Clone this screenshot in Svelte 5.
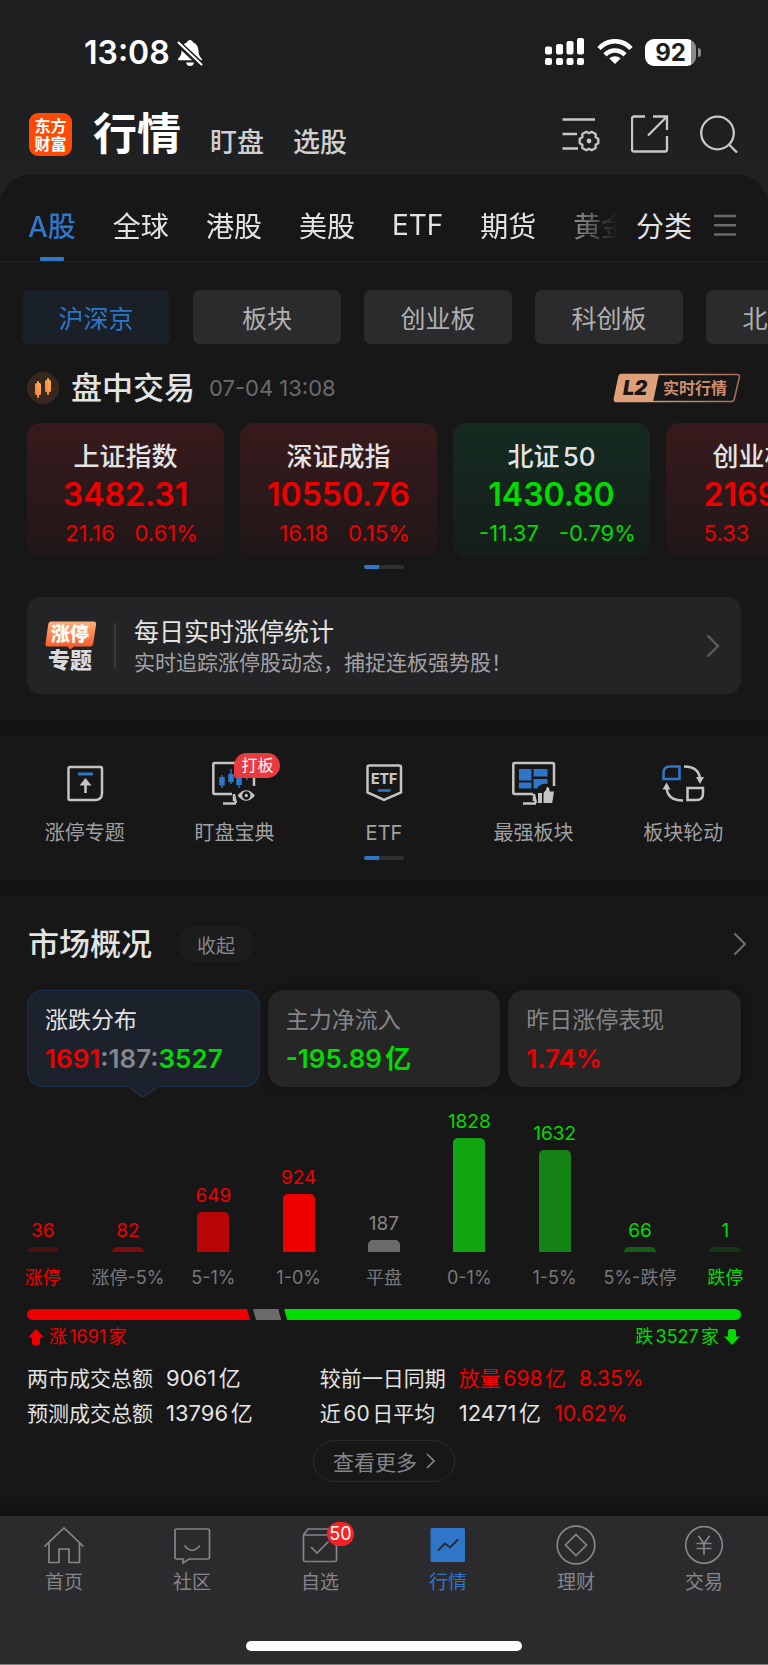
<script>
  let activeTab = 'A股';
  let activeBoard = '沪深京';
  let activeNav = '行情';

  const tabs = ['A股', '全球', '港股', '美股', 'ETF', '期货', '黄金'];
  const boards = ['沪深京', '板块', '创业板', '科创板', '北交所'];

  const indices = [
    { name: '上证指数', value: '3482.31', change: '21.16', percent: '0.61%', up: true },
    { name: '深证成指', value: '10550.76', change: '16.18', percent: '0.15%', up: true },
    { name: '北证50', value: '1430.80', change: '-11.37', percent: '-0.79%', up: false },
    { name: '创业板指', value: '2169.57', change: '5.33', percent: '0.25%', up: true }
  ];

  const shortcuts = ['涨停专题', '盯盘宝典', 'ETF', '最强板块', '板块轮动'];
  const navItems = ['首页', '社区', '自选', '行情', '理财', '交易'];

  const bars = [
    { label: '涨停', count: 36, color: '#4a1111', text: 'red', strong: true },
    { label: '涨停-5%', count: 82, color: '#7c0c0e', text: 'red' },
    { label: '5-1%', count: 649, color: '#b80507', text: 'red' },
    { label: '1-0%', count: 924, color: '#ee0000', text: 'red' },
    { label: '平盘', count: 187, color: '#6b6b6b', text: 'flat' },
    { label: '0-1%', count: 1828, color: '#12a512', text: 'green' },
    { label: '1-5%', count: 1632, color: '#158215', text: 'green' },
    { label: '5%-跌停', count: 66, color: '#155e15', text: 'green' },
    { label: '跌停', count: 1, color: '#163716', text: 'green', strong: true }
  ];

  const maxCount = 1828;
  // tiny counts still get a visible stub
  const barHeight = (count) => Math.max(5, Math.round((count / maxCount) * 114));

  const rise = 1691;
  const flat = 187;
  const fall = 3527;
</script>

<div class="page">
  <div class="status">
    <div class="clock">
      <span>13:08</span>
      <svg width="26" height="28" viewBox="0 0 26 28" fill="#fff">
        <path d="M13 1c1.500 0 2.600 1 2.900 2.200 3.400 1.200 5.300 4.200 5.500 8 .2 4 .8 6 3.100 8 .9 1 .6 2.100-.7 2.100H2.200c-1.300 0-1.600-1.100-.7-2.100 2.300-2 2.900-4 3.100-8 .2-3.800 2.100-6.800 5.500-8C10.400 2 11.500 1 13 1z" />
        <path d="M9 23.500h8c-.5 2.400-2 3.500-4 3.500s-3.500-1.100-4-3.500z" />
        <path d="M1 4l23.500 22" stroke="#1d1e20" stroke-width="6" />
        <path d="M1.500 3.500l23 22" stroke="#fff" stroke-width="2" stroke-linecap="round" />
      </svg>
    </div>
    <div class="signals">
      <svg width="40" height="28" viewBox="0 0 40 28" fill="#fff">
        <rect x="0" y="8.500" width="7" height="8" rx="2" /><rect x="0" y="20" width="7" height="7" rx="2" />
        <rect x="11" y="6" width="7" height="10.500" rx="2" /><rect x="11" y="20" width="7" height="7" rx="2" />
        <rect x="21.500" y="3" width="7" height="13.500" rx="2" /><rect x="21.500" y="20" width="7" height="7" rx="2" />
        <rect x="32" y="0" width="7" height="16.500" rx="2" /><rect x="32" y="20" width="7" height="7" rx="2" />
      </svg>
      <svg class="wifi" width="36" height="26" viewBox="0 0 36 26" fill="none" stroke="#fff" stroke-width="4.600">
        <path d="M2 9.500C11-.2 25-.2 34 9.500" />
        <path d="M8 15.800c5.800-5.800 14.200-5.800 20 0" />
        <path d="M18 25l-5.600-5.600c3.200-2.800 8-2.800 11.200 0z" fill="#fff" stroke="none" />
      </svg>
      <div class="battery"><span>92</span></div>
    </div>
  </div>

  <header>
    <div class="logo"><span>东方</span><span>财富</span></div>
    <h1>行情</h1>
    <a href="#watch">盯盘</a>
    <a href="#pick">选股</a>
    <div class="tools">
      <button aria-label="设置">
        <svg width="38" height="38" viewBox="0 0 38 38" fill="none" stroke="#c8c8c8" stroke-width="2.300">
          <path d="M.5 4.500H33M.5 19H15M.5 33.500H16" />
          <path transform="translate(27 26)" stroke-linejoin="round" d="M9.300-2.300v4.600L6.600 3.800l.1 3.100-4.100 2.300L0 7.800l-2.600 1.400-4.100-2.300.1-3.100-2.700-1.500v-4.600l2.700-1.500-.1-3.100 4.100-2.300L0-7.800l2.600-1.400 4.100 2.300-.1 3.100z" />
          <circle cx="27" cy="26" r="2.400" fill="#c8c8c8" stroke="none" />
        </svg>
      </button>
      <button aria-label="分享">
        <svg width="38" height="38" viewBox="0 0 38 38" fill="none" stroke="#c8c8c8" stroke-width="2.300">
          <path d="M14 1.500H3a2 2 0 0 0-2 2v31a2 2 0 0 0 2 2h31a2 2 0 0 0 2-2V21M22 1.500h14V15M36 1.500L17 20.500" />
        </svg>
      </button>
      <button aria-label="搜索">
        <svg width="38" height="38" viewBox="0 0 38 38" fill="none" stroke="#c8c8c8" stroke-width="2.300">
          <circle cx="17.500" cy="18" r="16.300" /><path d="M29 29.500l8 8" />
        </svg>
      </button>
    </div>
  </header>

  <main>
    <nav class="tabs">
      <div class="tab-list">
        {#each tabs as tab}
          <button class:active={tab === activeTab} on:click={() => (activeTab = tab)}>{tab}</button>
        {/each}
      </div>
      <button class="category">
        分类
        <svg width="22" height="24" viewBox="0 0 22 24" stroke="#6a6a6a" stroke-width="2.400">
          <path d="M0 3h22M0 12.300h22M0 21.500h22" />
        </svg>
      </button>
    </nav>

    <div class="boards">
      {#each boards as board}
        <button class:active={board === activeBoard} on:click={() => (activeBoard = board)}>{board}</button>
      {/each}
    </div>

    <div class="session">
      <svg width="32" height="32" viewBox="0 0 32 32">
        <defs>
          <linearGradient id="candle" x1="0" y1="1" x2="1" y2="0">
            <stop offset="0" stop-color="#ff7a35" /><stop offset="1" stop-color="#ffb45a" />
          </linearGradient>
        </defs>
        <circle cx="16" cy="16" r="16" fill="#38271f" />
        <g fill="url(#candle)">
          <rect x="8" y="11" width="6" height="12" rx="1.500" /><rect x="10" y="9" width="2" height="17" rx="1" />
          <rect x="18" y="8" width="6" height="12" rx="1.500" /><rect x="20" y="6" width="2" height="17" rx="1" />
        </g>
      </svg>
      <h2>盘中交易</h2>
      <time>07-04 13:08</time>
      <a class="level2" href="#level2" aria-label="L2 实时行情">
        <svg width="128" height="30" viewBox="0 0 128 30">
          <defs>
            <linearGradient id="copper" x1="0" y1="0" x2="1" y2="0">
              <stop offset="0" stop-color="#e9ad7f" /><stop offset="1" stop-color="#a5685a" />
            </linearGradient>
          </defs>
          <path d="M8.500 1.500H124q3 0 2.300 3l-5 21.500q-.7 2.500-3 2.500H3.500Q1 28.500 1.500 26L6 4q.6-2.500 2.500-2.500z" fill="none" stroke="url(#copper)" stroke-width="1.600" />
          <path d="M8.500 1H46l-6 28H3.500Q.6 29 1.200 26L6 3.500Q6.600 1 8.500 1z" fill="#dfa079" />
          <text x="10" y="22" class="l2-text">L2</text>
          <text x="50" y="21" class="l2-label">实时行情</text>
        </svg>
      </a>
    </div>

    <div class="indices">
      {#each indices as item}
        <a href="#index" class="index" class:down={!item.up}>
          <strong>{item.name}</strong>
          <b>{item.value}</b>
          <span class="delta"><span>{item.change}</span><span>{item.percent}</span></span>
        </a>
      {/each}
    </div>
    <div class="pager"></div>

    <a class="banner" href="#limit-up">
      <svg width="52" height="50" viewBox="0 0 52 50">
        <defs>
          <linearGradient id="flame" x1="0" y1="0" x2="0" y2="1">
            <stop offset="0" stop-color="#ffb07c" /><stop offset="1" stop-color="#fb5420" />
          </linearGradient>
        </defs>
        <path d="M6 .5h42.500q3 0 2.600 3l-3 19.500q-.5 2.500-3 2.500H29l-3.500 3-3-3H3q-3 0-2.500-3L3.300 3Q3.600.5 6 .5z" fill="url(#flame)" />
        <text x="6" y="20" class="tag-top">涨停</text>
        <text x="3" y="47" class="tag-bottom">专题</text>
      </svg>
      <div class="banner-text">
        <span class="banner-title">每日实时涨停统计</span>
        <span class="banner-sub">实时追踪涨停股动态，捕捉连板强势股！</span>
      </div>
      <svg width="14" height="24" viewBox="0 0 14 24" fill="none" stroke="#5d5d5f" stroke-width="2.400">
        <path d="M1.500 1.500L12 12 1.500 22.500" />
      </svg>
    </a>

    <section class="shortcuts">
      <div class="shortcut-row">
        {#each shortcuts as name, i}
          <a href="#shortcut">
            <span class="icon">
              <svg width="48" height="48" viewBox="0 0 48 48" fill="none" stroke="#c4c4c4" stroke-width="2.500">
                {#if i === 0}
                  <path d="M9 8h30.500q1.500 0 1.500 1.500V34q0 7-7 7H9q-1.500 0-1.500-1.500v-30Q7.500 8 9 8z" />
                  <path d="M17 15h15" stroke="#2f75c8" stroke-width="3" />
                  <path d="M24.500 34V22" stroke-width="2.600" />
                  <path d="M24.500 19l6 7.500h-12z" fill="#c4c4c4" stroke="none" />
                {:else if i === 1}
                  <path d="M22 35H4.500Q3.300 35 3.300 33.500v-28Q3.300 4 4.500 4h38q1.500 0 1.500 1.500V27" />
                  <path d="M24 35v7M13 44.500h13M24 36l2 8" />
                  <path d="M12 16v13M21 10v15M29 16v13M37 12v9" stroke="#2f75c8" stroke-width="1.400" />
                  <path d="M12 18v8.500M21 15v8M29 18v8" stroke="#2f75c8" stroke-width="5.600" />
                  <path d="M27.500 36.500q8.500-10.500 17.500 0-9 10.500-17.500 0z" fill="#c4c4c4" stroke="none" />
                  <circle cx="36.300" cy="36.500" r="2.900" fill="#c4c4c4" stroke="#171717" />
                {:else if i === 2}
                  <path d="M9 6.500h30q2 0 2 2v25L24 41 7.500 33.500v-25q0-2 1.500-2z" />
                  <text x="24" y="25" class="etf-text">ETF</text>
                  <path d="M18 31.500h12.500" stroke="#2f75c8" stroke-width="2.600" />
                {:else if i === 3}
                  <path d="M23 35H4.500Q3.300 35 3.300 33.500v-28Q3.300 4 4.500 4h38q1.500 0 1.500 1.500V27" />
                  <path d="M24 35v7M13 44.500h13M24 36l2 8" />
                  <path d="M9 10h12.500v11.500H9zM23.500 10h14v7.500h-14zM9 23.500h12.500v6H9zM23.500 20h14v5q-7-1-10.500 4.500h-3.500z" fill="#2f75c8" stroke="none" />
                  <path d="M28 34h4v10h-4zM33.500 34q3.200-2.500 3.300-6 3-.2 2.800 4.500H44l-1.800 11.500h-8.700z" fill="#c4c4c4" stroke="none" />
                {:else}
                  <path d="M11 7.500h9.500v12.500h-16v-6q0-6.500 6.500-6.500z" stroke="#2f75c8" stroke-width="2.600" />
                  <path d="M28.500 29H44v5.500q0 6.500-6.500 6.500h-9z" />
                  <path d="M25 7.500q15.500 0 16 13.500M24 41.500Q8 41.500 7.500 28" />
                  <path d="M41 25l-4-7h8zM7.500 23.500l-4 7h8z" fill="#c4c4c4" stroke="none" />
                {/if}
              </svg>
              {#if i === 1}<em>打板</em>{/if}
            </span>
            {name}
          </a>
        {/each}
      </div>
      <div class="pager"></div>
    </section>

    <section class="market">
      <div class="market-head">
        <h2>市场概况</h2>
        <button class="fold">收起</button>
        <a href="#market" aria-label="更多">
          <svg width="14" height="24" viewBox="0 0 14 24" fill="none" stroke="#6c6c6e" stroke-width="2.200">
            <path d="M1.500 1.500L12 12 1.500 22.500" />
          </svg>
        </a>
      </div>

      <div class="summary">
        <button class="card selected">
          <span>涨跌分布</span>
          <b><i class="red">{rise}</i>:{flat}:<i class="green">{fall}</i></b>
          <svg class="pointer" width="28" height="12" viewBox="0 0 28 12">
            <path d="M0 1L11 9.500q3 2.500 6 0L28 1V0H0z" fill="#1b222b" />
            <path d="M0 1L11 9.500q3 2.500 6 0L28 1" fill="none" stroke="#1d304b" stroke-width="1.500" />
          </svg>
        </button>
        <button class="card">
          <span>主力净流入</span>
          <b class="green">-195.89亿</b>
        </button>
        <button class="card">
          <span>昨日涨停表现</span>
          <b class="red">1.74%</b>
        </button>
      </div>

      <div class="chart">
        {#each bars as bar}
          <div class="column">
            <span class={bar.text}>{bar.count}</span>
            <div class="bar" style="height: {barHeight(bar.count)}px; background: {bar.color}"></div>
            <span class="range {bar.strong ? bar.text : ''}">{bar.label}</span>
          </div>
        {/each}
      </div>

      <div class="ratio">
        <div class="ratio-rise" style="flex-grow: {rise}"></div>
        <div class="ratio-flat" style="flex-grow: {flat}"></div>
        <div class="ratio-fall" style="flex-grow: {fall}"></div>
      </div>
      <div class="ratio-text">
        <span class="red">
          <svg width="16" height="16" viewBox="0 0 16 16" fill="#ee0000"><path d="M8 0l8 8.500h-4V14q0 2-2 2H6q-2 0-2-2V8.500H0z" /></svg>
          <span>涨{rise}家</span>
        </span>
        <span class="green">
          <span>跌{fall}家</span>
          <svg width="16" height="16" viewBox="0 0 16 16" fill="#00dc00"><path d="M8 16l8-8.500h-4V2q0-2-2-2H6Q4 0 4 2v5.500H0z" /></svg>
        </span>
      </div>

      <dl class="turnover">
        <div><dt>两市成交总额</dt><dd>9061亿</dd></div>
        <div><dt>较前一日同期</dt><dd class="red">放量698亿</dd><dd class="red">8.35%</dd></div>
        <div><dt>预测成交总额</dt><dd>13796亿</dd></div>
        <div><dt>近60日平均</dt><dd>12471亿</dd><dd class="red">10.62%</dd></div>
      </dl>

      <button class="more">
        查看更多
        <svg width="9" height="16" viewBox="0 0 9 16" fill="none" stroke="#85858a" stroke-width="1.600"><path d="M1 1l7 7-7 7" /></svg>
      </button>
    </section>
  </main>

  <footer>
    <nav class="bottom">
      {#each navItems as name, i}
        <a href="#nav" class:active={name === activeNav} on:click={() => (activeNav = name)}>
          <span class="icon">
            <svg width="40" height="40" viewBox="0 0 40 40" fill="none" stroke="#85858a" stroke-width="1.700">
              {#if i === 0}
                <path d="M.5 21.500L20 3l19.500 18.500M5 17.500v20h10V24h10v13.500h10.500v-20" />
              {:else if i === 1}
                <path d="M4.500 4H36q1.500 0 1.500 1.500v27q0 1.500-1.500 1.500H17l-6 4v-4H4.500Q3 34 3 32.500v-27Q3 4 4.500 4zM12.500 20.500q7.500 9.500 15.500 0" />
              {:else if i === 2}
                <path d="M3.500 10L8 4h24l4.500 6v25q0 1.500-1.500 1.500H5q-1.500 0-1.500-1.500zM3.500 10h33M11 22l6 6 11.500-11.500" />
              {:else if i === 3}
                <rect x="2.500" y="3" width="34.500" height="34" rx="1.500" fill="#2f75c8" stroke="none" />
                <path d="M10 25.500l7-7 5 4 8-8" stroke="#2b2b2d" stroke-width="2" />
              {:else if i === 4}
                <circle cx="20" cy="20" r="18.800" /><path d="M20 9.500L30.500 20 20 30.500 9.500 20z" />
              {:else}
                <circle cx="20" cy="20" r="18.300" /><path d="M14.500 11l5.500 7.500L25.500 11M20 18.500v11.500M12.500 18.500h15M12.500 23.500h15" />
              {/if}
            </svg>
            {#if i === 2}<em>50</em>{/if}
          </span>
          {name}
        </a>
      {/each}
    </nav>
    <div class="home-bar"></div>
  </footer>
</div>

<style>
  :global(body) {
    background: #171717;
  }

  .page {
    overflow: hidden;
    background: linear-gradient(#1d1e20 0, #1d1e20 110px, #202122 175px, #202122 100%);
    color: #e3e3e3;
    font-family: Inter, "Noto Sans CJK SC", sans-serif;
    text-autospace: normal;
  }

  button {
    padding: 0;
    border: 0;
    background: none;
    color: inherit;
    font: inherit;
    cursor: pointer;
  }

  a {
    color: inherit;
    text-decoration: none;
  }

  h1, h2, dl, dd {
    margin: 0;
  }

  h2 {
    font-size: 31px;
    line-height: 36px;
    font-weight: 500;
  }

  svg {
    display: block;
    flex: none;
  }

  em, i {
    font-style: normal;
  }

  .red {
    color: #ee0000;
  }

  .green {
    color: #00dc00;
  }

  .flat {
    color: #85858a;
  }

  /* status bar */
  .status {
    display: flex;
    justify-content: space-between;
    align-items: center;
    height: 38px;
    padding: 34px 67px 0 84px;
    color: #fff;
  }

  .clock, .signals {
    display: flex;
    align-items: center;
  }

  .clock {
    gap: 7px;
    font-size: 32px;
    line-height: 38px;
    font-weight: 600;
  }

  .signals {
    padding-bottom: 2px;
  }

  .wifi {
    margin: 0 12px;
  }

  .battery {
    position: relative;
    width: 51px;
    height: 27px;
    border-radius: 9px;
    background: linear-gradient(90deg, #fff 46px, #8b8b8c 46px);
    color: #1d1e20;
    font-size: 24px;
    line-height: 27px;
    font-weight: 700;
    text-align: center;
    margin-right: 5px;
  }

  .battery::after {
    content: "";
    position: absolute;
    right: -5px;
    top: 9px;
    width: 3px;
    height: 9px;
    border-radius: 0 4px 4px 0;
    background: #8b8b8c;
  }

  /* title row */
  header {
    display: flex;
    align-items: flex-end;
    padding: 40px 30px 19px 29px;
  }

  .logo {
    display: flex;
    flex-direction: column;
    justify-content: center;
    width: 43px;
    height: 43px;
    border-radius: 9px;
    background: #ff4a05;
    color: #fff;
    font-size: 16px;
    line-height: 18px;
    font-weight: 700;
    text-align: center;
  }

  h1 {
    margin-left: 21px;
    color: #fff;
    font-size: 44px;
    line-height: 44px;
    font-weight: 700;
  }

  header a {
    margin-left: 29px;
    color: #cfcfcf;
    font-size: 27px;
    line-height: 26px;
    font-weight: 500;
  }

  .tools {
    display: flex;
    gap: 31px;
    margin-left: auto;
    padding-bottom: 3px;
  }

  /* content */
  main {
    border-radius: 30px 30px 0 0;
    background: #171717;
  }

  .tabs {
    display: flex;
    height: 72px;
    padding: 14px 32px 0 28px;
    border-bottom: 1px solid #222;
    font-size: 28px;
    text-autospace: no-autospace;
  }

  .tab-list {
    display: flex;
    flex: 1;
    gap: 37px;
    min-width: 0;
    margin-right: 18px;
    overflow: hidden;
    mask-image: linear-gradient(90deg, #000 calc(100% - 72px), transparent);
  }

  .tab-list button {
    position: relative;
    flex: none;
  }

  .tab-list .active {
    color: #2f75c8;
    font-weight: 500;
  }

  .tab-list .active::after {
    content: "";
    position: absolute;
    left: 50%;
    bottom: 0;
    width: 24px;
    height: 4px;
    margin-left: -12px;
    border-radius: 1px;
    background: #2f75c8;
  }

  .category {
    display: flex;
    align-items: center;
    gap: 22px;
  }

  .boards {
    display: flex;
    gap: 23px;
    padding: 28px 0 26px 22px;
    overflow: hidden;
  }

  .boards button {
    flex: none;
    width: 148px;
    height: 54px;
    border-radius: 7px;
    background: #2b2b2d;
    color: #b0b0b2;
    font-size: 25px;
  }

  .boards .active {
    background: #1a2028;
    color: #2f75c8;
  }

  .session {
    display: flex;
    align-items: center;
    padding: 0 27px;
  }

  .session h2 {
    margin: 0 14px 0 12px;
  }

  .session time {
    color: #6a6a6c;
    font-size: 22px;
    line-height: 36px;
  }

  .level2 {
    margin-left: auto;
  }

  .l2-text {
    fill: #1b1614;
    font-size: 20px;
    font-weight: 900;
    font-style: italic;
  }

  .l2-label {
    fill: #cf8e70;
    font-size: 16px;
    font-weight: 700;
  }

  .indices {
    display: flex;
    gap: 16px;
    margin-top: 17px;
    padding-left: 27px;
    overflow: hidden;
  }

  .index {
    display: flex;
    flex: none;
    flex-direction: column;
    align-items: center;
    box-sizing: border-box;
    width: 197px;
    height: 134px;
    padding-top: 17px;
    border-radius: 14px;
    background: linear-gradient(#381a1c, #201718);
    color: #ee0000;
  }

  .index strong {
    color: #e3e3e3;
    font-size: 26px;
    line-height: 34px;
    font-weight: 500;
  }

  .index b {
    font-size: 32px;
    line-height: 42px;
    font-weight: 600;
  }

  .delta {
    display: flex;
    gap: 20px;
    padding-left: 12px;
    font-size: 22px;
    line-height: 35px;
  }

  .index.down {
    background: linear-gradient(#142b20, #161d1a);
    color: #00dc00;
  }

  .pager {
    width: 40px;
    height: 4px;
    margin: 8px auto 0;
    border-radius: 2px;
    background: linear-gradient(90deg, #2f75c8 15px, #303032 15px);
  }

  .banner {
    display: flex;
    align-items: center;
    height: 97px;
    margin: 28px 27px 27px;
    padding: 0 21px 0 18px;
    border-radius: 14px;
    background: #242426;
  }

  .banner-text {
    display: flex;
    flex: 1;
    flex-direction: column;
    margin-left: 17px;
    padding-left: 20px;
    background: linear-gradient(#39393b, #39393b) left / 2px 46px no-repeat;
  }

  .banner-title {
    font-size: 25px;
    line-height: 34px;
  }

  .banner-sub {
    color: #a2a2a4;
    font-size: 21px;
    line-height: 28px;
  }

  .tag-top, .tag-bottom {
    fill: #fff;
    font-size: 19px;
    font-weight: 900;
  }

  .tag-bottom {
    fill: #dadada;
    font-size: 22px;
  }

  .shortcuts {
    padding: 24px 10px 21px;
    border-top: 14px solid #121212;
    border-bottom: 14px solid #121212;
  }

  .shortcut-row {
    display: flex;
  }

  .shortcut-row a {
    display: flex;
    flex: 1;
    flex-direction: column;
    align-items: center;
    gap: 14px;
    color: #a0a0a2;
    font-size: 20px;
    line-height: 24px;
  }

  .icon {
    position: relative;
  }

  .icon em {
    position: absolute;
    left: 24px;
    top: -6px;
    width: 46px;
    border-radius: 13px 13px 13px 2px;
    background: #ea3a3d;
    color: #fff;
    font-size: 16px;
    line-height: 25px;
    text-align: center;
  }

  .etf-text {
    fill: #c4c4c4;
    stroke: none;
    font-size: 14px;
    font-weight: 800;
    text-anchor: middle;
  }

  .shortcuts .pager {
    margin-top: 11px;
  }

  .market {
    padding-top: 29px;
    border-bottom: 13px solid #121212;
  }

  .market-head {
    display: flex;
    align-items: center;
    height: 40px;
    padding: 0 21px 0 28px;
  }

  .fold {
    width: 76px;
    height: 36px;
    margin-left: 26px;
    border-radius: 18px;
    background: #1c1c1d;
    color: #85858a;
    font-size: 19px;
  }

  .market-head a {
    margin-left: auto;
  }

  .summary {
    display: flex;
    gap: 8px;
    padding: 26px 27px 0;
  }

  .card {
    display: flex;
    flex: 1;
    flex-direction: column;
    justify-content: center;
    align-items: flex-start;
    position: relative;
    box-sizing: border-box;
    height: 97px;
    padding: 2px 18px 0;
    border-radius: 16px;
    background: #262626;
    box-shadow: 0 0 8px #111;
    color: #85858a;
    font-size: 23px;
    line-height: 38px;
  }

  .card b {
    font-size: 26px;
    line-height: 40px;
    font-weight: 600;
  }

  .selected {
    background: #1b222b;
    box-shadow: inset 0 0 0 1px #1d304b;
  }

  .selected > span {
    color: #e3e3e3;
  }

  .pointer {
    position: absolute;
    left: 50%;
    top: 96px;
    margin-left: -14px;
  }

  .chart {
    display: flex;
    align-items: flex-end;
    height: 176px;
    margin-top: 25px;
  }

  .column {
    display: flex;
    flex: 1;
    flex-direction: column;
    align-items: center;
    font-size: 19px;
    line-height: 20px;
    white-space: nowrap;
  }

  .bar {
    width: 32px;
    margin: 6px 0 16px;
    border-radius: 5px 5px 0 0;
  }

  .range {
    font-size: 18px;
  }

  .range:not(.red):not(.green) {
    color: #77777b;
  }

  .ratio {
    display: flex;
    gap: 3px;
    height: 11px;
    margin: 21px 27px 7px;
    border-radius: 6px;
    overflow: hidden;
  }

  .ratio-rise {
    flex-basis: 4px;
    background: #ee0000;
    clip-path: polygon(0 0, calc(100% - 3px) 0, 100% 100%, 0 100%);
  }

  .ratio-flat {
    flex-basis: 4px;
    background: #6b6b6b;
    clip-path: polygon(0 0, calc(100% - 3px) 0, 100% 100%, 3px 100%);
  }

  .ratio-fall {
    background: #00dc00;
    clip-path: polygon(0 0, 100% 0, 100% 100%, 3px 100%);
  }

  .ratio-text {
    display: flex;
    justify-content: space-between;
    padding: 0 28px;
    font-size: 18px;
    line-height: 20px;
  }

  .ratio-text > span {
    display: flex;
    align-items: center;
    gap: 5px;
  }

  .turnover {
    display: grid;
    grid-template-columns: 41fr 59fr;
    margin: 14px 27px 9px;
    font-size: 21px;
    line-height: 35px;
  }

  .turnover div {
    display: flex;
    gap: 13px;
  }

  .turnover dt {
    width: 126px;
  }

  .turnover dd {
    font-size: 22px;
  }

  .turnover .red {
    font-size: 21px;
  }

  .more {
    display: flex;
    justify-content: center;
    align-items: center;
    gap: 9px;
    box-sizing: border-box;
    width: 142px;
    height: 42px;
    margin: 0 auto 21px;
    border: 1px solid #2a2a2b;
    border-radius: 21px;
    color: #85858a;
    font-size: 21px;
  }

  /* bottom bar */
  footer {
    padding: 9px 0 13px;
    border-bottom: 1px solid #7d7d7f;
    background: #2b2b2d;
  }

  .bottom {
    display: flex;
  }

  .bottom a {
    display: flex;
    flex: 1;
    flex-direction: column;
    align-items: center;
    gap: 6px;
    color: #85858a;
    font-size: 19px;
    line-height: 24px;
  }

  .bottom .active {
    color: #2f75c8;
  }

  .bottom em {
    left: 27px;
    top: -3px;
    width: 27px;
    border-radius: 12px;
    background: #f52323;
    font-size: 18px;
    line-height: 24px;
  }

  .home-bar {
    width: 36%;
    height: 10px;
    margin: 46px auto 0;
    border-radius: 5px;
    background: #fff;
  }
</style>
